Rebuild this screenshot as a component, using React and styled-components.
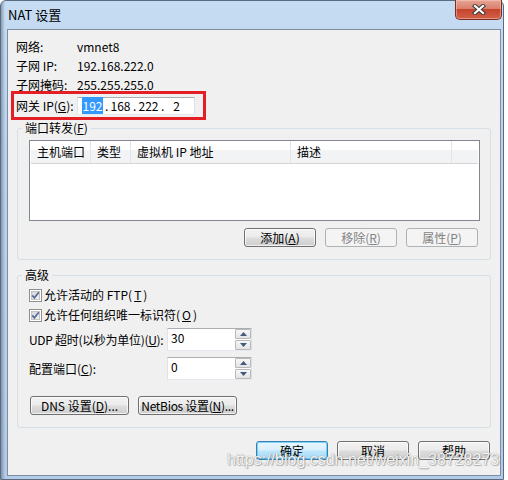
import React from 'react'
import styled, { createGlobalStyle } from 'styled-components'

const GlobalStyle = createGlobalStyle`
  html, body { margin: 0; padding: 0; background: #fff; }
  body {
    font-family: "Noto Sans CJK SC", "Microsoft YaHei", sans-serif;
    font-size: 12px;
    color: #000;
  }
  * { box-sizing: border-box; }
`

const Window = styled.div`
  position: relative;
  width: 504px;
  height: 480px;
  display: flex;
  flex-direction: column;
  border: 1px solid #5a6b80;
  border-radius: 6px 6px 0 0;
  background:
    linear-gradient(90deg, rgba(66, 80, 100, 0.45) 0, rgba(66, 80, 100, 0) 4px),
    linear-gradient(180deg, #c6dcf3 0%, #bcd4ee 25%, #b2cbe8 100%);
`

const TitleBar = styled.div`
  height: 28px;
  display: flex;
  align-items: center;
  padding-left: 7px;
`

const Title = styled.div`
  font-size: 13px;
  line-height: 16px;
  padding-bottom: 1px;
`

const CloseButton = styled.div`
  align-self: flex-start;
  margin: -1px 1px 0 auto;
  width: 47px;
  height: 20px;
  border: 1px solid #7b2c24;
  border-top: none;
  border-radius: 0 0 5px 5px;
  background: linear-gradient(180deg, #e7a595 0%, #d9806c 45%, #c6442c 50%, #d2614a 100%);
  box-shadow: inset 0 0 0 1px rgba(255, 210, 200, 0.45);
  display: flex;
  align-items: center;
  justify-content: center;
`

const Client = styled.div`
  flex: 1;
  margin: 0 2px 3px 6px;
  border: 1px solid #7f8fa3;
  background: #f0f0f0;
  padding: 7px 9px 0;
  display: flex;
  flex-direction: column;
`

const InfoRow = styled.div`
  display: flex;
  align-items: center;
  height: 19px;
  margin-left: -1px;
  line-height: 16px;
`

const Label = styled.div`
  width: ${p => p.$width || 61}px;
  flex-shrink: 0;
  white-space: nowrap;
  letter-spacing: ${p => p.$tight ? '-0.3px' : 'normal'};
`

const RedBox = styled.div`
  display: flex;
  align-items: center;
  width: 195px;
  height: 29px;
  margin: -3px 0 0 -6px;
  padding-left: 2px;
  border: 3px solid #e31e24;
`

const IpInput = styled.div`
  width: 118px;
  height: 18px;
  display: flex;
  align-items: center;
  padding-left: 2px;
  background: #fff;
  border: 1px solid;
  border-color: #abadb3 #dbdfe6 #e3e9ef #e2e3ea;
  line-height: 14px;
`

const Octet = styled.span`
  width: 25px;
  text-align: center;
`

const Selected = styled.span`
  background: #3399ff;
  color: #fff;
  padding: 0 1px;
`

const Dot = styled.span`
  width: 3px;
  text-align: center;
`

const Group = styled.fieldset`
  margin: ${p => p.$top || 0}px 0 0;
  min-width: 0;
  padding: ${p => p.$padTop}px 10px ${p => p.$padBottom}px 11px;
  border: 1px solid #d5dfe5;
  border-radius: 3px;
`

const Legend = styled.legend`
  padding: 0 3px;
  margin-left: -7px;
  line-height: 16px;
`

const ListView = styled.div`
  height: 81px;
  border: 1px solid #828790;
  background: #fff;
  padding: 0 1px;
`

const ListHeader = styled.div`
  display: flex;
  height: 23px;
  border-bottom: 1px solid #d5d5d5;
  background: linear-gradient(180deg, #ffffff 0%, #ffffff 40%, #f2f3f5 41%, #f2f3f5 100%);
`

const HeaderCell = styled.div`
  width: ${p => (p.$width ? `${p.$width}px` : 'auto')};
  flex: ${p => (p.$width ? '0 0 auto' : '1')};
  border-right: 1px solid #e3e4e7;
  padding-left: 6px;
  line-height: 22px;
  white-space: nowrap;
  &:last-child { border-right: none; }
`

const ButtonRow = styled.div`
  display: flex;
  justify-content: ${p => (p.$end ? 'flex-end' : 'flex-start')};
  gap: 9px;
  margin-top: ${p => p.$top}px;
  padding: 0 ${p => p.$right || 0}px 0 ${p => p.$left || 0}px;
`

const Button = styled.button`
  width: ${p => p.$width || 72}px;
  height: 19px;
  padding: 0;
  font: inherit;
  font-size: 12px;
  line-height: 17px;
  white-space: nowrap;
  letter-spacing: ${p => p.$tight ? '-0.3px' : 'normal'};
  color: #000;
  border-radius: 3px;
  border: 1px solid #707070;
  background: linear-gradient(180deg, #f2f2f2 0%, #ebebeb 48%, #dddddd 52%, #cfcfcf 100%);
  box-shadow: inset 0 0 0 1px rgba(255, 255, 255, 0.7);

  ${p => p.$primary && `
    border-color: #3c7fb1;
    background: linear-gradient(180deg, #eaf6fd 0%, #d9f0fc 48%, #bee6fd 52%, #a7d9f5 100%);
    box-shadow: inset 0 0 0 1px rgba(80, 200, 250, 0.75);
  `}

  &:disabled {
    color: #838383;
    border-color: #adb2b5;
    background: #f4f4f4;
    box-shadow: none;
  }
`

const Key = styled.u`
  text-underline-offset: 1px;
`

const CheckRow = styled.div`
  display: flex;
  align-items: center;
  height: 20px;
  gap: 2px;
  line-height: 16px;
  white-space: nowrap;
`

const FieldRow = styled.div`
  display: flex;
  align-items: center;
  margin-top: ${p => p.$top}px;
  line-height: 16px;
`

const Spinner = styled.div`
  width: 85px;
  height: 23px;
  display: flex;
  background: #fff;
  border: 1px solid;
  border-color: #abadb3 #dbdfe6 #e3e9ef #e2e3ea;
`

const SpinText = styled.div`
  flex: 1;
  padding: 2px 0 0 3px;
  line-height: 14px;
`

const SpinColumn = styled.div`
  width: 16px;
  display: flex;
  flex-direction: column;
  gap: 1px;
`

const SpinButton = styled.div`
  flex: 1;
  display: flex;
  align-items: center;
  justify-content: center;
  border: 1px solid #b8b8b8;
  border-radius: 1px;
  background: linear-gradient(180deg, #f7f7f7 0%, #e4e4e4 100%);
`

const Watermark = styled.div`
  position: absolute;
  left: 226px;
  top: 450px;
  font-family: "Liberation Sans", Arial, sans-serif;
  font-size: 16px;
  line-height: 18px;
  color: rgba(255, 255, 255, 0.92);
  text-shadow: 0 0 1px #7d7d7d, 1px 1px 1px rgba(0, 0, 0, 0.25);
  pointer-events: none;
  white-space: nowrap;
`

const CloseIcon = () => (
  <svg width="14" height="11" viewBox="0 0 14 11">
    <path d="M3 2 L11 9 M11 2 L3 9" stroke="#3b3b3b" strokeWidth="4.2" strokeLinecap="square" />
    <path d="M3 2 L11 9 M11 2 L3 9" stroke="#ffffff" strokeWidth="2.2" strokeLinecap="square" />
  </svg>
)

const CheckBox = () => (
  <svg width="13" height="13" viewBox="0 0 13 13">
    <defs>
      <linearGradient id="cbg" x1="0" y1="0" x2="1" y2="1">
        <stop offset="0" stopColor="#d4d4d4" />
        <stop offset="1" stopColor="#f7f7f7" />
      </linearGradient>
    </defs>
    <rect x="0.5" y="0.5" width="12" height="12" fill="#fff" stroke="#8f8f8f" />
    <rect x="2.5" y="2.5" width="8" height="8" fill="url(#cbg)" stroke="#c4c4c4" />
    <path d="M3.2 6.4 L5.4 8.8 L9.8 3.2" fill="none" stroke="#5a6d9e" strokeWidth="1.8" />
  </svg>
)

const Arrow = ({ up }) => (
  <svg width="7" height="4" viewBox="0 0 7 4">
    <path d={up ? 'M0 4 L3.5 0 L7 4 Z' : 'M0 0 L3.5 4 L7 0 Z'} fill="#44587e" />
  </svg>
)

const SpinBox = ({ value }) => (
  <Spinner>
    <SpinText>{value}</SpinText>
    <SpinColumn>
      <SpinButton><Arrow up /></SpinButton>
      <SpinButton><Arrow /></SpinButton>
    </SpinColumn>
  </Spinner>
)

const App = () => (
  <>
    <GlobalStyle />
    <Window>
      <TitleBar>
        <Title>NAT 设置</Title>
        <CloseButton><CloseIcon /></CloseButton>
      </TitleBar>
      <Client>
        <InfoRow><Label>网络:</Label>vmnet8</InfoRow>
        <InfoRow><Label>子网 IP:</Label>192.168.222.0</InfoRow>
        <InfoRow><Label>子网掩码:</Label>255.255.255.0</InfoRow>
        <RedBox>
          <Label>网关 IP(<Key>G</Key>):</Label>
          <IpInput>
            <Octet><Selected>192</Selected></Octet>
            <Dot>.</Dot>
            <Octet>168</Octet>
            <Dot>.</Dot>
            <Octet>222</Octet>
            <Dot>.</Dot>
            <Octet>2</Octet>
          </IpInput>
        </RedBox>

        <Group $padTop={4} $padBottom={12}>
          <Legend>端口转发(<Key>F</Key>)</Legend>
          <ListView>
            <ListHeader>
              <HeaderCell $width={60}>主机端口</HeaderCell>
              <HeaderCell $width={40}>类型</HeaderCell>
              <HeaderCell $width={160}>虚拟机 IP 地址</HeaderCell>
              <HeaderCell $width={161}>描述</HeaderCell>
              <HeaderCell />
            </ListHeader>
          </ListView>
          <ButtonRow $end $top={7} $right={2}>
            <Button>添加(<Key>A</Key>)</Button>
            <Button disabled>移除(<Key>R</Key>)</Button>
            <Button disabled>属性(<Key>P</Key>)</Button>
          </ButtonRow>
        </Group>

        <Group $top={7} $padTop={2} $padBottom={12}>
          <Legend>高级</Legend>
          <CheckRow><CheckBox />允许活动的 FTP(<Key>T</Key>)</CheckRow>
          <CheckRow><CheckBox />允许任何组织唯一标识符(<Key>O</Key>)</CheckRow>
          <FieldRow $top={3}>
            <Label $width={138} $tight>UDP 超时(以秒为单位)(<Key>U</Key>):</Label>
            <SpinBox value="30" />
          </FieldRow>
          <FieldRow $top={6}>
            <Label $width={138}>配置端口(<Key>C</Key>):</Label>
            <SpinBox value="0" />
          </FieldRow>
          <ButtonRow $top={16} $left={1}>
            <Button $width={99}>DNS 设置(<Key>D</Key>)...</Button>
            <Button $width={99} $tight>NetBios 设置(<Key>N</Key>)...</Button>
          </ButtonRow>
        </Group>

        <ButtonRow $end $top={13} $right={1}>
          <Button $primary>确定</Button>
          <Button>取消</Button>
          <Button>帮助</Button>
        </ButtonRow>
      </Client>
      <Watermark>https://blog.csdn.net/weixin_38728273</Watermark>
    </Window>
  </>
)

export default App
